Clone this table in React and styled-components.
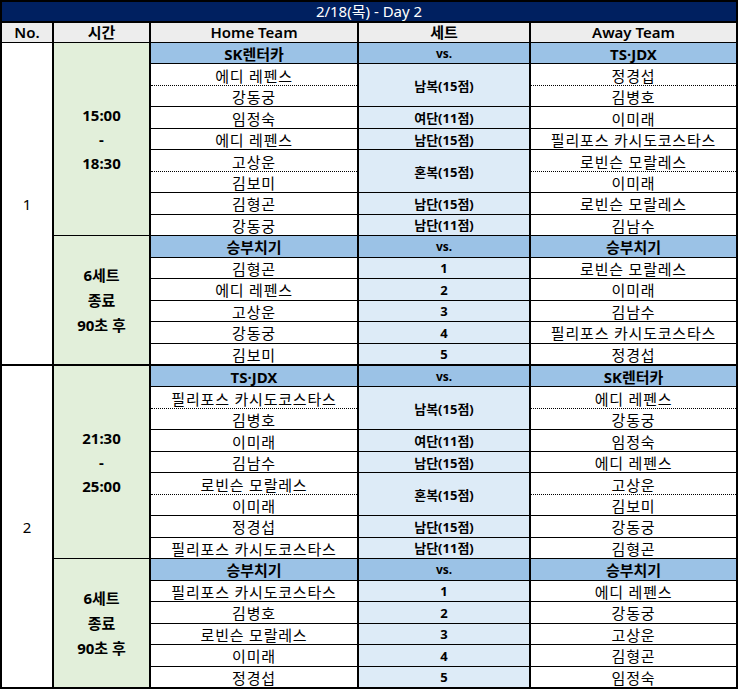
import React from 'react';
import styled, { createGlobalStyle } from 'styled-components';

const GlobalStyle = createGlobalStyle`
  body {
    margin: 0;
    background: #fff;
    font-family: "Noto Sans", "Noto Sans CJK KR", sans-serif;
    color: #000;
  }
`;

const COLUMNS = '50px 95px 206px 170px 1fr';

const Sheet = styled.div`
  width: 738px;
  box-sizing: border-box;
  border: 2px solid #000;
  border-bottom: 0;
`;

const Title = styled.div`
  height: 21px;
  box-sizing: border-box;
  border-bottom: 2px solid #000;
  background: #002060;
  color: #fff;
  font-size: 15px;
  line-height: 19px;
  text-align: center;
`;

const HeaderRow = styled.div`
  display: grid;
  grid-template-columns: ${COLUMNS};
  column-gap: 2px;
  height: 20px;
  box-sizing: border-box;
  border-bottom: 2px solid #000;
  background: #000;
`;

const HeadCell = styled.div`
  background: #ededed;
  font-size: 15px;
  font-weight: 600;
  line-height: 19px;
  text-align: center;
`;

const Match = styled.div`
  display: grid;
  grid-template-columns: ${COLUMNS};
  grid-template-rows: repeat(15, minmax(0, 1fr));
  column-gap: 2px;
  row-gap: 1px;
  height: 323px;
  box-sizing: border-box;
  border-bottom: 2px solid #000;
  background: #000;
`;

const Cell = styled.div`
  display: flex;
  align-items: center;
  justify-content: center;
  grid-row: span ${(p) => p.$span || 1};
  min-height: 0;
  background: #fff;
  line-height: 18px;
  white-space: nowrap;
`;

const NoCell = styled(Cell)`
  font-size: 15px;
`;

const TimeCell = styled(Cell)`
  flex-direction: column;
  background: #e2efda;
  font-size: 15px;
  font-weight: 700;
  line-height: ${(p) => p.$lh}px;
`;

const TeamCell = styled(Cell)`
  background: #9bc2e6;
  font-size: 15px;
  font-weight: 700;
  padding-top: 1px;
`;

const VsCell = styled(Cell)`
  background: #9bc2e6;
  font-size: 12px;
  font-weight: 700;
  padding-top: 1px;
`;

const NameCell = styled(Cell)`
  font-size: 15px;
  letter-spacing: 0.8px;
  padding-top: 2px;
`;

const SetCell = styled(Cell)`
  background: #ddebf7;
  font-size: 13px;
  font-weight: 700;
  padding-top: 1px;
`;

const PairCell = styled.div`
  display: flex;
  flex-direction: column;
  grid-row: span 2;
  min-height: 0;
  background: #fff;
`;

const Half = styled.div`
  flex: 1;
  min-height: 0;
  display: flex;
  align-items: center;
  justify-content: center;
  font-size: 15px;
  line-height: 18px;
  letter-spacing: 0.8px;
  padding-top: 2px;
  white-space: nowrap;
  border-bottom: ${(p) => (p.$divider ? '1px dotted #000' : '0')};
`;

const matches = [
  {
    no: 1,
    time: ['15:00', '-', '18:30'],
    home: 'SK렌터카',
    away: 'TS·JDX',
    games: [
      { home: ['에디 레펜스', '강동궁'], set: '남복(15점)', away: ['정경섭', '김병호'] },
      { home: '임정숙', set: '여단(11점)', away: '이미래' },
      { home: '에디 레펜스', set: '남단(15점)', away: '필리포스 카시도코스타스' },
      { home: ['고상운', '김보미'], set: '혼복(15점)', away: ['로빈슨 모랄레스', '이미래'] },
      { home: '김형곤', set: '남단(15점)', away: '로빈슨 모랄레스' },
      { home: '강동궁', set: '남단(11점)', away: '김남수' },
    ],
    tiebreak: [
      ['김형곤', '로빈슨 모랄레스'],
      ['에디 레펜스', '이미래'],
      ['고상운', '김남수'],
      ['강동궁', '필리포스 카시도코스타스'],
      ['김보미', '정경섭'],
    ],
  },
  {
    no: 2,
    time: ['21:30', '-', '25:00'],
    home: 'TS·JDX',
    away: 'SK렌터카',
    games: [
      { home: ['필리포스 카시도코스타스', '김병호'], set: '남복(15점)', away: ['에디 레펜스', '강동궁'] },
      { home: '이미래', set: '여단(11점)', away: '임정숙' },
      { home: '김남수', set: '남단(15점)', away: '에디 레펜스' },
      { home: ['로빈슨 모랄레스', '이미래'], set: '혼복(15점)', away: ['고상운', '김보미'] },
      { home: '정경섭', set: '남단(15점)', away: '강동궁' },
      { home: '필리포스 카시도코스타스', set: '남단(11점)', away: '김형곤' },
    ],
    tiebreak: [
      ['필리포스 카시도코스타스', '에디 레펜스'],
      ['김병호', '강동궁'],
      ['로빈슨 모랄레스', '고상운'],
      ['이미래', '김형곤'],
      ['정경섭', '임정숙'],
    ],
  },
];

const Players = ({ value }) => {
  if (Array.isArray(value)) {
    return (
      <PairCell>
        <Half $divider>{value[0]}</Half>
        <Half>{value[1]}</Half>
      </PairCell>
    );
  }
  return <NameCell>{value}</NameCell>;
};

const MatchBlock = ({ match }) => (
  <Match>
    <NoCell $span={15}>{match.no}</NoCell>
    <TimeCell $span={9} $lh={24}>
      {match.time.map((t, i) => (
        <span key={i}>{t}</span>
      ))}
    </TimeCell>
    <TeamCell>{match.home}</TeamCell>
    <VsCell>vs.</VsCell>
    <TeamCell>{match.away}</TeamCell>
    {match.games.map((g, i) => (
      <React.Fragment key={i}>
        <Players value={g.home} />
        <SetCell $span={Array.isArray(g.home) ? 2 : 1}>{g.set}</SetCell>
        <Players value={g.away} />
      </React.Fragment>
    ))}
    <TimeCell $span={6} $lh={25}>
      <span>6세트</span>
      <span>종료</span>
      <span>90초 후</span>
    </TimeCell>
    <TeamCell>승부치기</TeamCell>
    <VsCell>vs.</VsCell>
    <TeamCell>승부치기</TeamCell>
    {match.tiebreak.map(([h, a], i) => (
      <React.Fragment key={i}>
        <NameCell>{h}</NameCell>
        <SetCell>{i + 1}</SetCell>
        <NameCell>{a}</NameCell>
      </React.Fragment>
    ))}
  </Match>
);

const App = () => {
  return (
    <>
      <GlobalStyle />
      <Sheet>
        <Title>2/18(목) - Day 2</Title>
        <HeaderRow>
          <HeadCell>No.</HeadCell>
          <HeadCell>시간</HeadCell>
          <HeadCell>Home Team</HeadCell>
          <HeadCell>세트</HeadCell>
          <HeadCell>Away Team</HeadCell>
        </HeaderRow>
        {matches.map((m) => (
          <MatchBlock key={m.no} match={m} />
        ))}
      </Sheet>
    </>
  );
};

export default App;
